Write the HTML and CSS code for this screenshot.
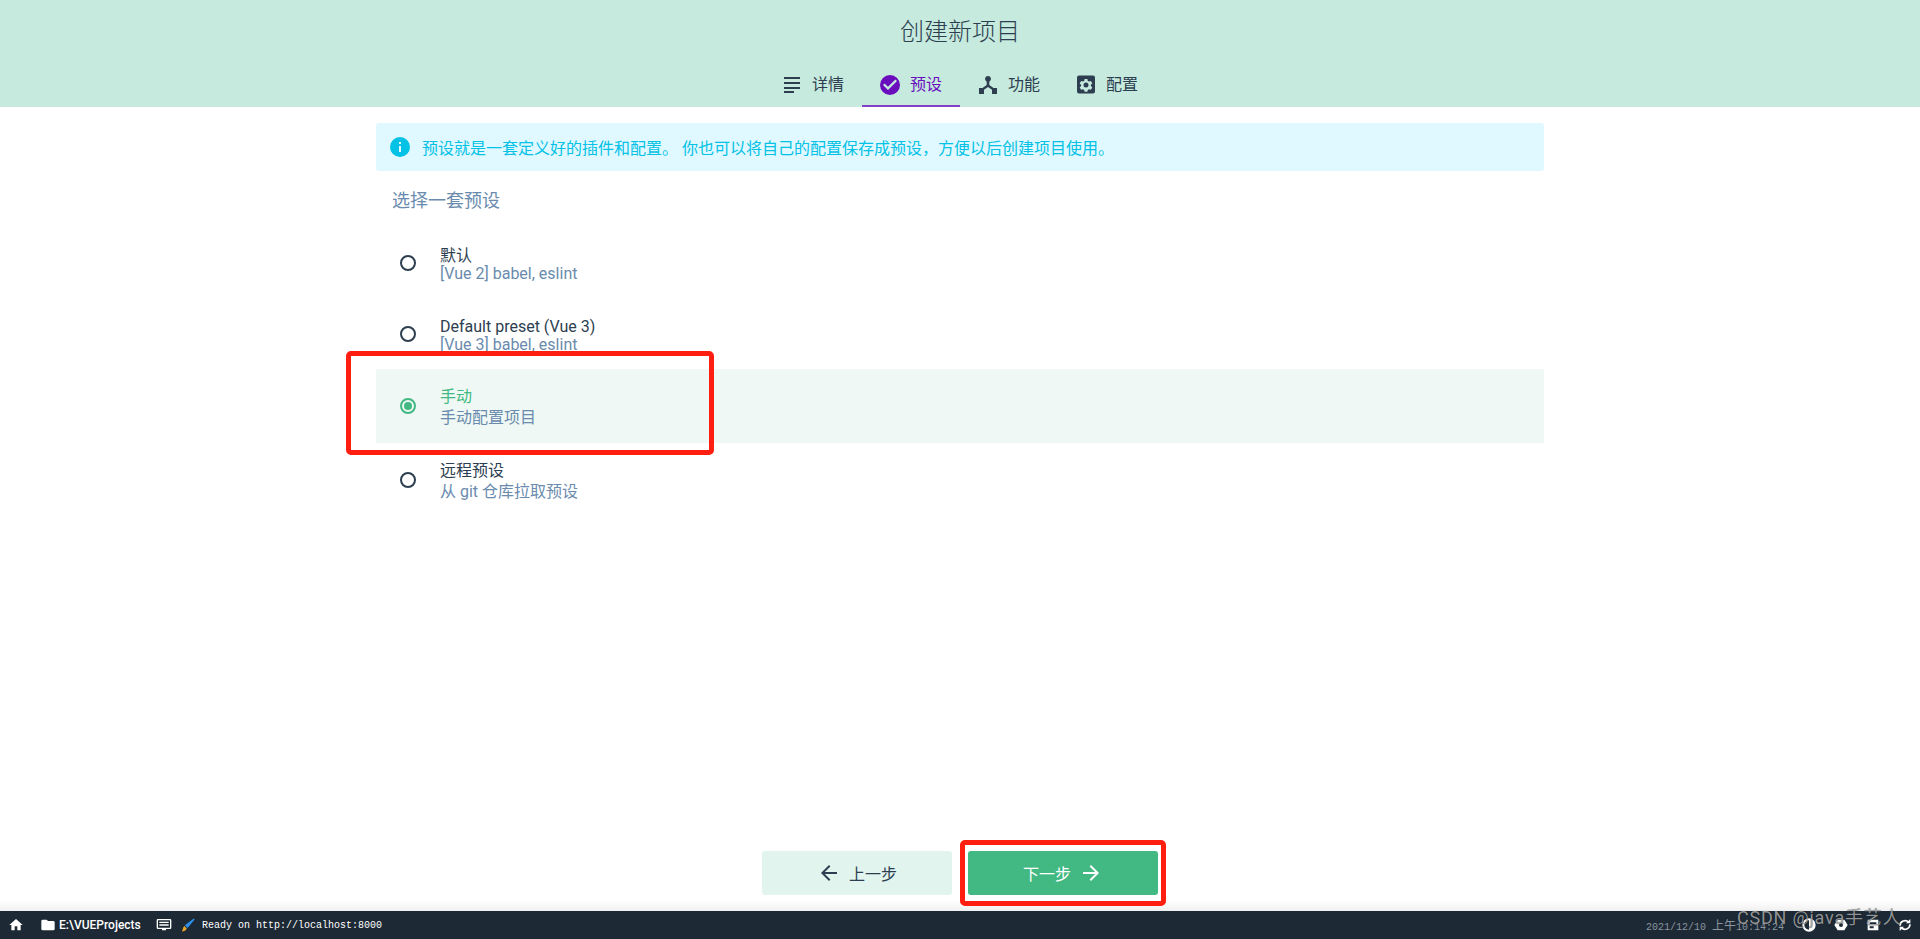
FILE: index.html
```html
<!DOCTYPE html>
<html lang="zh-CN">
<head>
<meta charset="utf-8">
<title>创建新项目</title>
<link rel="stylesheet" href="styles.css">
</head>
<body>
<div class="app">
  <header class="header">
    <h1 class="title">创建新项目</h1>
    <nav class="tabs">
      <div class="tab">
        <svg class="tab-icon" viewBox="0 0 24 24"><path d="M4 4h16v2H4zM4 9h16v2H4zM4 14h16v2H4zM4 18h10v2H4z"/></svg>
        <span>详情</span>
      </div>
      <div class="tab tab-active">
        <svg class="tab-icon" viewBox="0 0 24 24"><path d="M12 2a10 10 0 1 0 0 20a10 10 0 0 0 0-20zM10 17l-5-5 1.600-1.600L10 13.800l7.400-7.400L19 8z" fill-rule="evenodd"/></svg>
        <span>预设</span>
      </div>
      <div class="tab">
        <svg class="tab-icon" viewBox="0 0 24 24"><path d="M12 3a3 3 0 0 1 1.300 5.700V12l4.200 3H21v6h-5v-4.300L12 14l-4 2.700V21H3v-6h3.500l4.200-3V8.700A3 3 0 0 1 12 3z"/></svg>
        <span>功能</span>
      </div>
      <div class="tab">
        <svg class="tab-icon" viewBox="0 0 24 24"><path fill-rule="evenodd" d="M5 3h14a2 2 0 0 1 2 2v14a2 2 0 0 1-2 2H5a2 2 0 0 1-2-2V5a2 2 0 0 1 2-2zM10.600 6.500l-.4 1.900-1.200.7-1.900-.6-1.400 2.400 1.400 1.300v1.400l-1.400 1.300 1.400 2.400 1.900-.6 1.200.7.4 1.900h2.800l.4-1.900 1.200-.7 1.900.6 1.400-2.400-1.400-1.300v-1.400l1.400-1.300-1.400-2.400-1.900.6-1.200-.7-.4-1.900zM12 10a2.500 2.500 0 1 1 0 5a2.500 2.500 0 0 1 0-5z" transform="translate(0 -.5)"/></svg>
        <span>配置</span>
      </div>
    </nav>
  </header>

  <main class="content">
    <div class="alert">
      <svg class="alert-icon" viewBox="0 0 20 20"><path fill-rule="evenodd" d="M10 0a10 10 0 1 0 0 20a10 10 0 0 0 0-20zM9 5h2v2H9zM9 9h2v6H9z"/></svg>
      <span>预设就是一套定义好的插件和配置。 你也可以将自己的配置保存成预设，方便以后创建项目使用。</span>
    </div>
    <div class="prompt">选择一套预设</div>
    <div class="options">
      <div class="option option-a">
        <span class="radio"></span>
        <div class="option-text"><div class="option-name">默认</div><div class="option-desc">[Vue 2] babel, eslint</div></div>
      </div>
      <div class="option option-a">
        <span class="radio"></span>
        <div class="option-text"><div class="option-name">Default preset (Vue 3)</div><div class="option-desc">[Vue 3] babel, eslint</div></div>
      </div>
      <div class="option option-b option-selected">
        <span class="radio"></span>
        <div class="option-text"><div class="option-name">手动</div><div class="option-desc">手动配置项目</div></div>
      </div>
      <div class="option option-b">
        <span class="radio"></span>
        <div class="option-text"><div class="option-name">远程预设</div><div class="option-desc">从 git 仓库拉取预设</div></div>
      </div>
    </div>
  </main>

  <div class="actions">
    <button class="btn btn-back">
      <svg class="btn-icon" viewBox="0 0 24 24"><path d="M20 11H7.800l5.600-5.600L12 4l-8 8 8 8 1.400-1.400L7.800 13H20z"/></svg>
      <span>上一步</span>
    </button>
    <button class="btn btn-next">
      <span>下一步</span>
      <svg class="btn-icon" viewBox="0 0 24 24"><path d="M4 11h12.200l-5.600-5.600L12 4l8 8-8 8-1.400-1.400 5.600-5.600H4z"/></svg>
    </button>
  </div>

  <footer class="status">
    <svg class="st-icon st-home" viewBox="0 0 24 24"><path d="M10 20v-6h4v6h5v-8h3L12 3 2 12h3v8z"/></svg>
    <svg class="st-icon st-folder" viewBox="0 0 24 24"><path d="M10 4H4a2 2 0 0 0-2 2v12a2 2 0 0 0 2 2h16a2 2 0 0 0 2-2V8a2 2 0 0 0-2-2h-8z"/></svg>
    <span class="st-path">E:\VUEProjects</span>
    <svg class="st-icon st-term" viewBox="0 0 24 24"><path fill-rule="evenodd" d="M3 3h18a2 2 0 0 1 2 2v11a2 2 0 0 1-2 2h-6v2H9v-2H3a2 2 0 0 1-2-2V5a2 2 0 0 1 2-2zM3 5v11h18V5zM5 7h14v2H5zM5 11h14v2H5z"/></svg>
    <svg class="st-brush" viewBox="0 0 14 14"><path d="M12.800 .6l.8 .8-7 8.600-2.800-2.800z" fill="#2b8fe8"/><path d="M3.400 8l2.400 2.400c-.7 1.900-2.600 3-4.900 3 1-1.300.7-4 2.500-5.400z" fill="#e9a62c"/></svg>
    <span class="st-log">Ready on http://localhost:8000</span>
    <span class="st-spacer"></span>
    <span class="st-time">2021/12/10 <span class="st-cjk">上午</span>10:14:24</span>
    <svg class="st-icon st-r" viewBox="0 0 24 24"><path fill-rule="evenodd" d="M12 2a10 10 0 1 0 0 20a10 10 0 0 0 0-20zM12 5v14a7 7 0 0 1 0-14z"/></svg>
    <svg class="st-icon st-r" viewBox="0 0 24 24"><path d="M7 4h10l5 8-5 8H7l-5-8zM12 9a3 3 0 1 0 0 6a3 3 0 0 0 0-6z" fill-rule="evenodd"/></svg>
    <svg class="st-icon st-r" viewBox="0 0 24 24"><path d="M4 4h16v16H4zM7 8v3h10V8zM7 14v3h6v-3z" fill-rule="evenodd"/></svg>
    <svg class="st-icon st-r st-sync" viewBox="0 0 24 24"><path d="M4.500 13a7.500 7.500 0 0 1 13-5M19.500 11a7.500 7.500 0 0 1-13 5"/><path class="st-sync-tip" d="M20 3v6.500h-6.500zM4 21v-6.500h6.500z"/></svg>
  </footer>

  <div class="mark mark-option"></div>
  <div class="mark mark-next"></div>
  <div class="watermark">CSDN @java手艺人</div>
</div>
</body>
</html>
```

FILE: styles.css
```css
* { box-sizing: border-box; }
html, body { margin: 0; height: 100%; }
body {
  font-family: Roboto, "Noto Sans CJK SC", sans-serif;
  font-size: 16px;
  color: #2c3e50;
  background: #fff;
  overflow: hidden;
}
.app {
  position: relative;
  height: 939px;
  display: flex;
  flex-direction: column;
}
.header {
  height: 107px;
  background: #c6eadd;
  display: flex;
  flex-direction: column;
  align-items: center;
}
.title {
  margin: 0;
  height: 65px;
  padding-top: 14px;
  font-size: 24px;
  line-height: 36px;
  font-weight: 300;
}
.tabs { display: flex; height: 42px; }
.tab {
  width: 98px;
  padding-left: 16px;
  display: flex;
  align-items: center;
  gap: 8px;
  border-bottom: 2px solid transparent;
  line-height: 20px;
}
.tab-icon { width: 24px; height: 24px; fill: #2c3e50; flex: none; }
.tab-active { color: #6a0dbd; border-bottom-color: #8242c6; }
.tab-active .tab-icon { fill: #6a0dbd; }

.content {
  width: 1168px;
  margin: 16px auto 0;
  flex: 1;
}
.alert {
  height: 48px;
  background: #e0f8ff;
  border-radius: 3px;
  color: #03c2e6;
  display: flex;
  align-items: center;
  padding-left: 14px;
  gap: 12px;
}
.alert-icon { width: 20px; height: 20px; fill: #03c2e6; flex: none; }
.prompt {
  height: 56px;
  padding: 17px 0 0 16px;
  font-size: 18px;
  line-height: 26px;
  color: #6a8bad;
}
.options { display: flex; flex-direction: column; }
.option {
  display: flex;
  align-items: center;
  padding-left: 24px;
  gap: 24px;
}
.option-a { height: 71px; line-height: 18px; }
.option-b { height: 74px; line-height: 21px; }
.option-a .option-text { padding-top: 5px; }
.option-b .option-text { padding-top: 2px; }
.option-selected { background: #eff8f4; color: #42b983; }
.radio {
  width: 16px;
  height: 16px;
  border: 2px solid #2c3e50;
  border-radius: 50%;
  flex: none;
  display: flex;
  align-items: center;
  justify-content: center;
}
.option-selected .radio { border-color: #42b983; }
.option-selected .radio::after {
  content: "";
  width: 8px;
  height: 8px;
  border-radius: 50%;
  background: #42b983;
}
.option-desc { color: #6a8bad; }

.actions {
  height: 60px;
  display: flex;
  justify-content: center;
  gap: 16px;
  background: linear-gradient(to top, #f0f0f0 0, #fff 10px);
}
.btn {
  width: 190px;
  height: 44px;
  border: 0;
  border-radius: 3px;
  padding: 0;
  font: inherit;
  display: flex;
  align-items: center;
  justify-content: center;
  gap: 8px;
}
.btn-icon { width: 24px; height: 24px; flex: none; }
.btn-back { background: #e2f4ee; color: #2c3e50; }
.btn-back .btn-icon { fill: #2c3e50; }
.btn-next { background: #42b983; color: #fff; }
.btn-next .btn-icon { fill: #fff; }

.status {
  height: 28px;
  background: #1d2935;
  display: flex;
  align-items: center;
  color: #fff;
  font-size: 12px;
}
.st-icon { width: 16px; height: 16px; fill: #fff; flex: none; }
.st-home { margin-left: 8px; }
.st-folder { margin-left: 16px; }
.st-path { margin-left: 3px; font-weight: 500; width: 81px; }
.st-term { margin-left: 16px; }
.st-brush { width: 14px; height: 14px; margin-left: 9px; flex: none; }
.st-log {
  margin-left: 7px;
  font-family: "Liberation Mono", monospace;
  font-size: 10px;
}
.st-spacer { flex: 1; }
.st-time {
  color: #8a949e;
  font-family: "Liberation Mono", "Noto Sans CJK SC", monospace;
  font-size: 10px;
  margin-right: 17px;
}
.st-cjk { font-size: 12px; }
.st-r { margin-right: 16px; }
.st-sync { margin-right: 7px; fill: none; stroke: #fff; stroke-width: 2.500; }
.st-sync-tip { fill: #fff; stroke: none; }

.mark {
  position: absolute;
  border: 5px solid #ff1f10;
  border-radius: 5px;
}
.mark-option { left: 346px; top: 351px; width: 368px; height: 104px; }
.mark-next { left: 960px; top: 840px; width: 206px; height: 66px; }
.watermark {
  position: absolute;
  left: 1737px;
  top: 906px;
  font-size: 18px;
  line-height: 24px;
  letter-spacing: .8px;
  color: rgba(170, 170, 170, .85);
  text-shadow: 0 0 1px rgba(0, 0, 0, .5);
}
```
